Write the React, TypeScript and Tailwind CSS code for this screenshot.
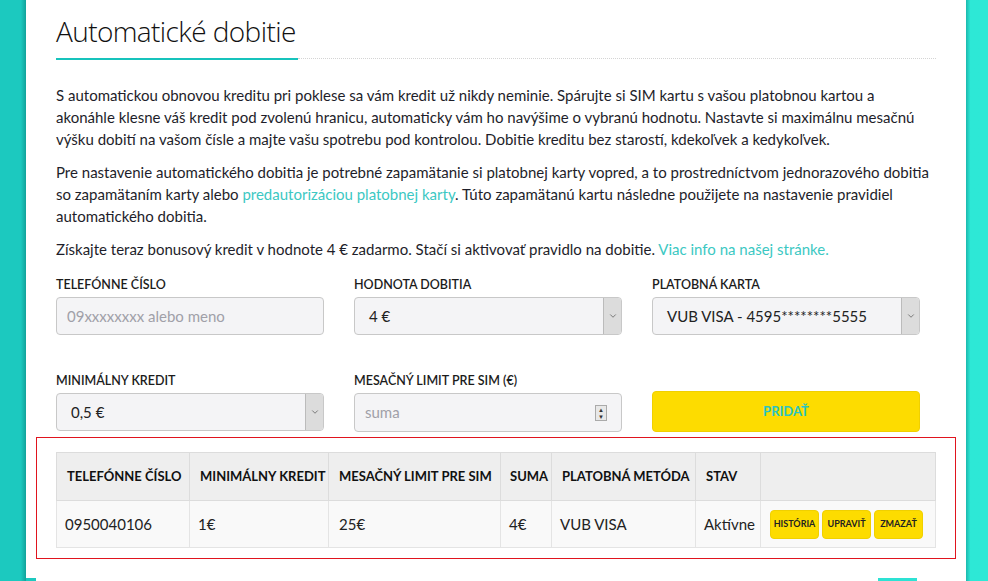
import { ChevronDown } from 'lucide-react';

const rows = [
  { phone: '0950040106', min: '1€', limit: '25€', sum: '4€', method: 'VUB VISA', state: 'Aktívne' },
];

function Select({ value }: { value: string }) {
  return (
    <div className="flex h-[38px] w-full items-stretch overflow-hidden rounded-[4px] border border-[#c8c8c8] bg-[#f4f4f6]">
      <div className="flex flex-1 items-center pl-[14px] text-[15px] text-[#222]">{value}</div>
      <div className="flex w-[18px] items-center justify-center border-l border-[#bbb] bg-[#dcdcdc]">
        <ChevronDown className="h-[10px] w-[10px] text-[#666]" strokeWidth={2} />
      </div>
    </div>
  );
}

function Label({ children }: { children: React.ReactNode }) {
  return <div className="mb-[4px] text-[12.5px] font-semibold uppercase leading-[16px] text-[#1c1c1c]">{children}</div>;
}

export default function App() {
  return (
    <div className="flex h-[581px] w-full overflow-hidden font-['Lato',sans-serif] text-[#1e1e2a]">
      <div className="w-[26px] shrink-0 bg-gradient-to-r from-[#1cc9bf] from-80% to-[#12a39b]" />
      <main className="flex flex-1 flex-col bg-white px-[30px] pt-[12px]">
        <div className="flex items-end">
          <h1 className="border-b-2 border-[#17c3bc] pb-[8px] pr-[2px] font-['Open_Sans',sans-serif] text-[28px] font-light leading-[38px] tracking-[-0.6px] text-[#111]">
            Automatické dobitie
          </h1>
          <div className="mb-[1px] flex-1 border-b border-dotted border-[#d4d4d4]" />
        </div>

        <div className="mt-[24px] space-y-[11px] text-[15px] leading-[22px]">
          <p>
            S automatickou obnovou kreditu pri poklese sa vám kredit už nikdy neminie. Spárujte si SIM kartu s vašou platobnou kartou a
            akonáhle klesne váš kredit pod zvolenú hranicu, automaticky vám ho navýšime o vybranú hodnotu. Nastavte si maximálnu mesačnú
            výšku dobití na vašom čísle a majte vašu spotrebu pod kontrolou. Dobitie kreditu bez starostí, kdekoľvek a kedykoľvek.
          </p>
          <p>
            Pre nastavenie automatického dobitia je potrebné zapamätanie si platobnej karty vopred, a to prostredníctvom jednorazového dobitia
            so zapamätaním karty alebo <span className="text-[#3cc8c3]">predautorizáciou platobnej karty</span>. Túto zapamätanú kartu následne použijete na nastavenie pravidiel
            automatického dobitia.
          </p>
          <p>
            Získajte teraz bonusový kredit v hodnote 4 € zadarmo. Stačí si aktivovať pravidlo na dobitie.{' '}
            <span className="text-[#3cc8c3]">Viac info na našej stránke.</span>
          </p>
        </div>

        <div className="mt-[17px] grid w-[864px] grid-cols-3 gap-x-[30px]">
          <div>
            <Label>Telefónne číslo</Label>
            <div className="flex h-[38px] items-center rounded-[4px] border border-[#c8c8c8] bg-[#f4f4f6] pl-[10px] text-[15px] text-[#a0a0a8]">
              09xxxxxxxx alebo meno
            </div>
          </div>
          <div>
            <Label>Hodnota dobitia</Label>
            <Select value="4 €" />
          </div>
          <div>
            <Label>Platobná karta</Label>
            <Select value="VUB VISA - 4595********5555" />
          </div>
        </div>

        <div className="mt-[38px] grid w-[864px] grid-cols-3 gap-x-[30px]">
          <div>
            <Label>Minimálny kredit</Label>
            <Select value="0,5 €" />
          </div>
          <div>
            <Label>Mesačný limit pre SIM (€)</Label>
            <div className="flex h-[39px] items-center justify-between rounded-[4px] border border-[#c8c8c8] bg-[#f4f4f6] pl-[10px] pr-[14px] text-[15px] text-[#a0a0a8]">
              suma
              <div className="flex h-[16px] w-[12px] flex-col border border-[#aaa] bg-[#e8e8e8] text-[6px] leading-[7px] text-[#333]">
                <span className="text-center">▲</span>
                <span className="text-center">▼</span>
              </div>
            </div>
          </div>
          <div className="flex items-end">
            <button className="h-[41px] w-full rounded-[4px] border border-[#f0d000] bg-[#fddc00] text-[13px] font-bold text-[#2ac4c0]">
              PRIDAŤ
            </button>
          </div>
        </div>

        <div className="-mx-[20px] mt-[5px] border border-[#e0141e] px-[19px] pb-[10px] pt-[14px]">
          <table className="w-full table-fixed border-collapse text-left">
            <thead>
              <tr className="h-[48px] whitespace-nowrap bg-[#eeeeee] text-[13px] font-bold uppercase text-[#111]">
                <th className="w-[133px] border border-[#dcdcdc] pl-[10px] font-bold">Telefónne číslo</th>
                <th className="w-[139px] border border-[#dcdcdc] pl-[10px] font-bold">Minimálny kredit</th>
                <th className="w-[172px] border border-[#dcdcdc] pl-[10px] font-bold">Mesačný limit pre SIM</th>
                <th className="w-[51px] border border-[#dcdcdc] pl-[9px] font-bold">Suma</th>
                <th className="w-[144px] border border-[#dcdcdc] pl-[10px] font-bold">Platobná metóda</th>
                <th className="w-[65px] border border-[#dcdcdc] pl-[10px] font-bold">Stav</th>
                <th className="border border-[#dcdcdc]" />
              </tr>
            </thead>
            <tbody>
              {rows.map((r) => (
                <tr key={r.phone} className="h-[47px] bg-[#f9f9f9] text-[15px] text-[#222]">
                  <td className="border border-[#e4e4e4] pl-[8px]">{r.phone}</td>
                  <td className="border border-[#e4e4e4] pl-[8px]">{r.min}</td>
                  <td className="border border-[#e4e4e4] pl-[10px]">{r.limit}</td>
                  <td className="border border-[#e4e4e4] pl-[8px]">{r.sum}</td>
                  <td className="border border-[#e4e4e4] pl-[8px]">{r.method}</td>
                  <td className="border border-[#e4e4e4] pl-[8px]">{r.state}</td>
                  <td className="border border-[#e4e4e4] pl-[9px]">
                    <div className="flex gap-[3px]">
                      {['HISTÓRIA', 'UPRAVIŤ', 'ZMAZAŤ'].map((b) => (
                        <button key={b} className="h-[29px] w-[49px] rounded-[4px] border border-[#f0d000] bg-[#fddc00] text-[9px] font-bold text-[#222]">
                          {b}
                        </button>
                      ))}
                    </div>
                  </td>
                </tr>
              ))}
            </tbody>
          </table>
        </div>

        <div className="mt-auto flex h-[3px]">
          <div className="-ml-[30px] w-[10px] bg-[#1cc9bf]" />
          <div className="w-[842px]" />
          <div className="w-[39px] bg-[#2de2d4]" />
        </div>
      </main>
      <div className="w-[22px] shrink-0 bg-gradient-to-r from-[#1cb8ae] to-[#2de8d6] to-20%" />
    </div>
  );
}
